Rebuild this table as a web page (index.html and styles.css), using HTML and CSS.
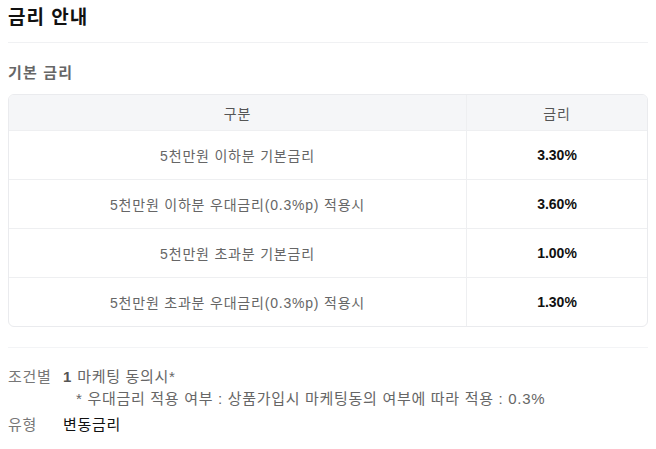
FILE: index.html
```html
<!DOCTYPE html>
<html lang="ko">
<head>
<meta charset="utf-8">
<link rel="stylesheet" href="styles.css">
</head>
<body>
<div class="page">
  <h1 class="title">금리 안내</h1>
  <h2 class="subtitle">기본 금리</h2>
  <div class="table-wrap">
    <table class="rates">
      <thead>
        <tr><th class="c-name">구분</th><th class="c-rate">금리</th></tr>
      </thead>
      <tbody>
        <tr><td class="c-name">5천만원 이하분 기본금리</td><td class="c-rate">3.30%</td></tr>
        <tr><td class="c-name">5천만원 이하분 우대금리(0.3%p) 적용시</td><td class="c-rate">3.60%</td></tr>
        <tr><td class="c-name">5천만원 초과분 기본금리</td><td class="c-rate">1.00%</td></tr>
        <tr><td class="c-name">5천만원 초과분 우대금리(0.3%p) 적용시</td><td class="c-rate">1.30%</td></tr>
      </tbody>
    </table>
  </div>
  <div class="info">
    <div class="info-row">
      <span class="label">조건별</span>
      <div class="value">
        <div><b class="num">1</b> 마케팅 동의시*</div>
        <div class="note">* 우대금리 적용 여부 : 상품가입시 마케팅동의 여부에 따라 적용 : 0.3%</div>
      </div>
    </div>
    <div class="info-row">
      <span class="label">유형</span>
      <div class="value strong">변동금리</div>
    </div>
  </div>
</div>
</body>
</html>
```
FILE: styles.css
```css
html, body { margin: 0; padding: 0; background: #fff; }
body {
  padding: 8px;
  font-family: "Liberation Sans", "Noto Sans CJK KR", sans-serif;
  color: #666;
}
.page { width: 640px; }
.title {
  margin: 0;
  font-size: 19px;
  line-height: 20px;
  font-weight: 700;
  letter-spacing: 1px;
  color: #111;
  padding-bottom: 14px;
  border-bottom: 1px solid #f0f1f3;
}
.subtitle {
  margin: 20px 0 11px;
  font-size: 15px;
  line-height: 20px;
  font-weight: 600;
  letter-spacing: 1.2px;
  color: #666;
}
.table-wrap {
  border: 1px solid #eaebee;
  border-radius: 6px;
  overflow: hidden;
}
.rates {
  width: 100%;
  border-collapse: collapse;
  font-size: 14px;
}
.rates th {
  background: #f5f6f8;
  font-weight: 400;
  color: #555;
  height: 35px;
  padding: 0;
  letter-spacing: 0.8px;
}
.rates td {
  height: 48px;
  padding: 0;
  text-align: center;
  border-top: 1px solid #eeeff1;
  color: #666;
}
.rates .c-name { width: 457px; border-right: 1px solid #eeeff1; }
.rates td.c-name { letter-spacing: 0.8px; }
.rates td.c-rate { font-weight: 700; color: #111; }
.info {
  margin-top: 20px;
  border-top: 1px solid #f3f4f6;
  padding-top: 18px;
  font-size: 15px;
  line-height: 22px;
  letter-spacing: 0.7px;
  display: flex;
  flex-direction: column;
  gap: 4px;
}
.info-row { display: flex; }
.label { width: 55px; flex: none; color: #777; }
.num { color: #555; margin-right: 1px; letter-spacing: 0; }
.note { padding-left: 13px; }
.strong { color: #111; }
```
